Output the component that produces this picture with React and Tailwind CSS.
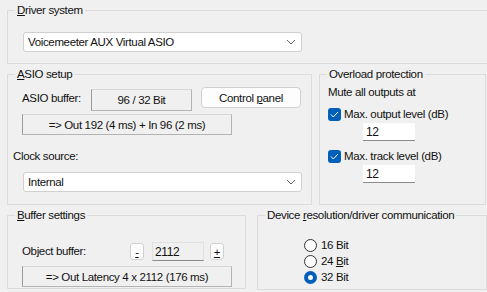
import { useState } from "react";

function Chevron() {
  return (
    <svg width="10" height="6" viewBox="0 0 10 6" className="shrink-0">
      <path d="M1 1 L5 5 L9 1" fill="none" stroke="#606060" strokeWidth="1" />
    </svg>
  );
}

function Combo({ value, className = "" }) {
  return (
    <div
      className={`flex h-[20px] w-[279px] items-center justify-between rounded-[3px] border border-[#d0d0d0] bg-white pr-[5px] pl-[4px] ${className}`}
    >
      <span className="leading-4">{value}</span>
      <Chevron />
    </div>
  );
}

function CheckBox({ checked }) {
  return (
    <span
      className={`flex h-[13px] w-[13px] shrink-0 items-center justify-center rounded-[3px] ${
        checked ? "bg-[#005fb8]" : "border border-[#333] bg-white"
      }`}
    >
      {checked && (
        <svg width="9" height="7" viewBox="0 0 9 7">
          <path d="M1 3.5 L3.3 6 L8 1" fill="none" stroke="#fff" strokeWidth="1" />
        </svg>
      )}
    </span>
  );
}

function Radio({ checked, children }) {
  return (
    <div className="flex h-4 items-center">
      <span
        className={`flex h-[13px] w-[13px] shrink-0 items-center justify-center rounded-full ${
          checked ? "bg-[#005fb8]" : "border border-[#333] bg-white"
        }`}
      >
        {checked && <span className="h-[5px] w-[5px] rounded-full bg-white" />}
      </span>
      <span className="ml-[4px] leading-4">{children}</span>
    </div>
  );
}

function Group({ label, className = "", children }) {
  return (
    <fieldset className={`border border-[#dcdcdc] ${className}`}>
      <legend className="ml-[7px] px-[2px] leading-4">{label}</legend>
      {children}
    </fieldset>
  );
}

function InfoBox({ children, className = "" }) {
  return (
    <div
      className={`flex items-center justify-center border-t border-r border-b border-l border-t-[#d6d6d6] border-r-[#b4b4b4] border-b-[#b4b4b4] border-l-[#9a9a9a] bg-[#f0f0f0] leading-4 ${className}`}
    >
      {children}
    </div>
  );
}

function NumField({ value }) {
  return (
    <div className="ml-[43px] mt-[1px] flex h-[18px] w-[52px] items-center border-b border-b-[#8a8a8a] bg-white pl-[3px] text-[12px] leading-4">
      {value}
    </div>
  );
}

export default function App() {
  const [bits] = useState(32);

  return (
    <div className="h-[292px] w-[487px] overflow-hidden bg-[#f0f0f0] pt-[2px] pl-[7px] font-['Liberation_Sans',sans-serif] text-[11.5px] tracking-[-0.35px] text-[#111]">
      <Group label={<><u>D</u>river system</>} className="h-[62px] w-[490px]">
        <Combo value="Voicemeeter AUX Virtual ASIO" className="mt-[14px] ml-[15px]" />
      </Group>

      <div className="mt-[2px] flex gap-[7px]">
        <Group label={<><u>A</u>SIO setup</>} className="h-[139px] w-[305px]">
          <div className="mt-[5px] flex items-start">
            <span className="mt-[3px] ml-[14px] w-[69px] leading-4">ASIO buffer:</span>
            <InfoBox className="mt-[2px] h-[22px] w-[101px]">96 / 32 Bit</InfoBox>
            <button
              type="button"
              className="ml-[9px] h-[21px] w-[100px] rounded-[4px] border border-[#d0d0d0] bg-[#fdfdfd] leading-4"
            >
              Control <u>p</u>anel
            </button>
          </div>
          <InfoBox className="mt-[3px] ml-[14px] h-[21px] w-[210px]">
            =&gt; Out 192 (4 ms) + In 96 (2 ms)
          </InfoBox>
          <div className="mt-[13px] ml-[5px] leading-4">Clock source:</div>
          <Combo value="Internal" className="mt-[8px] ml-[15px]" />
        </Group>

        <Group label="Overload protection" className="h-[139px] w-[167px]">
          <div className="mt-[2px] ml-[8px] leading-4">Mute all outputs at</div>
          <div className="mt-[6px] ml-[8px] flex h-4 items-center">
            <CheckBox checked />
            <span className="ml-[3px] leading-4">Max. output level (dB)</span>
          </div>
          <NumField value="12" />
          <div className="mt-[7px] ml-[8px] flex h-4 items-center">
            <CheckBox checked />
            <span className="ml-[3px] leading-4">Max. track level (dB)</span>
          </div>
          <NumField value="12" />
        </Group>
      </div>

      <div className="mt-[2px] flex items-start gap-[11px]">
        <Group label={<><u>B</u>uffer settings</>} className="h-[82px] w-[239px]">
          <div className="mt-[19px] flex h-[19px] items-start">
            <span className="mt-[1px] ml-[14px] w-[108px] leading-4">Object buffer:</span>
            <button
              type="button"
              className="mt-[1px] h-[17px] w-[14px] rounded-[3px] border border-[#d0d0d0] bg-[#fdfdfd] leading-3"
            >
              <u>-</u>
            </button>
            <div className="ml-[8px] flex h-[19px] w-[52px] items-center border border-[#e0e0e0] border-b-[#8a8a8a] bg-[#f0f0f0] pl-[2px] text-[12px] leading-4">
              2112
            </div>
            <button
              type="button"
              className="mt-[1px] ml-[6px] h-[17px] w-[14px] rounded-[3px] border border-[#d0d0d0] bg-[#fdfdfd] leading-3"
            >
              <u>+</u>
            </button>
          </div>
          <InfoBox className="mt-[5px] ml-[14px] h-[21px] w-[210px]">
            =&gt; Out Latency 4 x 2112 (176 ms)
          </InfoBox>
        </Group>

        <Group
          label={<>Device <u>r</u>esolution/driver communication</>}
          className="h-[83px] w-[230px]"
        >
          <div className="mt-[14px] ml-[46px] flex flex-col">
            <Radio checked={bits === 16}>16 Bit</Radio>
            <Radio checked={bits === 24}>24 <u>B</u>it</Radio>
            <Radio checked={bits === 32}>32 Bit</Radio>
          </div>
        </Group>
      </div>
    </div>
  );
}
